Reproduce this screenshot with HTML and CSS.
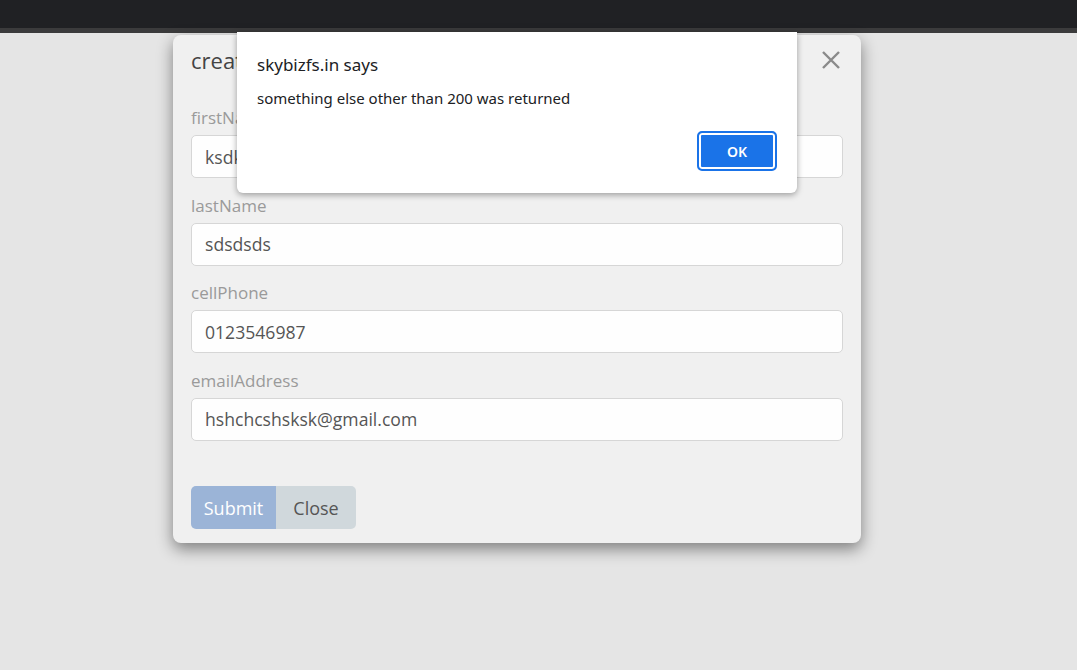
FILE: index.html
```html
<!doctype html>
<html>
<head>
<title>create contact</title>
<link rel="stylesheet" href="styles.css">
</head>
<body>

<div class="topbar"></div>
<div class="topline"></div>

<div class="page">
	<div class="modal">
		<div class="modalHeader">
			<h3 class="modalTitle">createContact</h3>
			<svg class="closeIcon" width="20" height="20" viewBox="0 0 20 20">
				<path d="M2 2 L18 18 M18 2 L2 18" stroke="#8a8a8a" stroke-width="2.4" fill="none"/>
			</svg>
		</div>

		<form class="modalBody">
			<div class="field">
				<label>firstName</label>
				<input type="text" value="ksdksdksd">
			</div>
			<div class="field">
				<label>lastName</label>
				<input type="text" value="sdsdsds">
			</div>
			<div class="field">
				<label>cellPhone</label>
				<input type="text" value="0123546987">
			</div>
			<div class="field">
				<label>emailAddress</label>
				<input type="text" value="hshchcshsksk@gmail.com">
			</div>

			<div class="buttons">
				<button type="button" class="submitBtn">Submit</button>
				<button type="button" class="closeBtn">Close</button>
			</div>
		</form>
	</div>

	<div class="alertBox">
		<div class="alertTitle">skybizfs.in says</div>
		<div class="alertMessage">something else other than 200 was returned</div>
		<div class="alertActions">
			<button class="okBtn">OK</button>
		</div>
	</div>
</div>

</body>
</html>
```

FILE: styles.css
```css
body {
	margin: 0px;
	background-color: #e5e5e5;
	font-family: "Open Sans", "Noto Sans", sans-serif;
}
.topbar {
	height: 28px;
	background-color: #202124;
}
.topline {
	height: 5px;
	background-color: #3b3b3c;
}
.page {
	position: relative;
	height: 637px;
}
.modal {
	margin: 2px 0px 0px 173px;
	width: 688px;
	box-sizing: border-box;
	padding: 10px 18px 14px 18px;
	background-color: #f0f0f0;
	border-radius: 8px;
	box-shadow: 0px 6px 16px rgba(0, 0, 0, 0.45);
}
.modalHeader {
	display: flex;
	align-items: center;
	justify-content: space-between;
	height: 30px;
}
.modalTitle {
	margin: 0px;
	font-size: 22px;
	font-weight: normal;
	line-height: 30px;
	color: #444;
}
.closeIcon {
	margin-right: 2px;
}
.modalBody {
	margin-top: 31px;
}
.field {
	display: flex;
	flex-direction: column;
	margin-bottom: 15.5px;
}
.field label {
	font-size: 17px;
	line-height: 23px;
	color: #9a9a9a;
	margin-bottom: 6px;
}
.field input {
	height: 43px;
	box-sizing: border-box;
	border: 1px solid #d6d6d6;
	border-radius: 5px;
	background-color: #fefefe;
	padding: 0px 13px;
	font-family: "Open Sans", "Noto Sans", sans-serif;
	font-size: 17.6px;
	color: #555;
}
.buttons {
	display: flex;
	margin-top: 45.5px;
}
.buttons button {
	height: 43px;
	border: none;
	font-family: "Open Sans", "Noto Sans", sans-serif;
	font-size: 18px;
	padding: 0px;
}
.submitBtn {
	width: 85px;
	background-color: #9bb4d7;
	color: #fff;
	border-radius: 5px 0px 0px 5px;
}
.closeBtn {
	width: 80px;
	background-color: #d0d8dc;
	color: #555;
	border-radius: 0px 5px 5px 0px;
}
.alertBox {
	position: absolute;
	left: 237px;
	top: -3px;
	width: 560px;
	height: 161px;
	box-sizing: border-box;
	padding: 20px 20px 0px 20px;
	background-color: #fff;
	border-radius: 0px 0px 6px 6px;
	box-shadow: 0px 2px 6px rgba(0, 0, 0, 0.35);
	font-family: "Noto Sans", "Open Sans", sans-serif;
	color: #202124;
}
.alertTitle {
	font-size: 17px;
	line-height: 26px;
}
.alertMessage {
	margin-top: 10px;
	font-size: 15px;
	line-height: 20px;
}
.alertActions {
	display: flex;
	justify-content: flex-end;
	margin-top: 23px;
}
.okBtn {
	width: 80px;
	height: 40px;
	margin-right: 0px;
	border: 2px solid #1a73e8;
	box-shadow: inset 0px 0px 0px 2px #fff;
	border-radius: 5px;
	background-color: #1a73e8;
	color: #fff;
	font-family: "Noto Sans", "Open Sans", sans-serif;
	font-size: 14px;
	font-weight: 600;
}
```
